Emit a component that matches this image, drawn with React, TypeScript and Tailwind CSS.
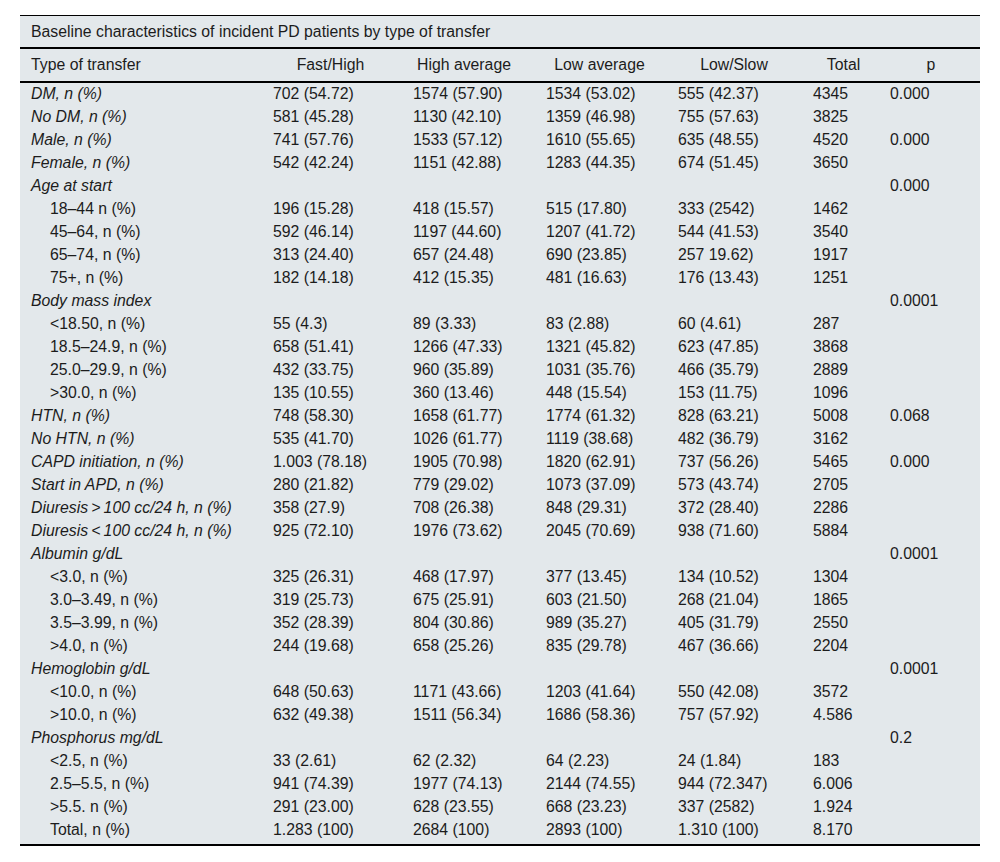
type Row = {
  label: string;
  italic?: boolean;
  indent?: boolean;
  cells?: string[];
  p?: string;
};

const rows: Row[] = [
  { label: "DM, n (%)", italic: true, cells: ["702 (54.72)", "1574 (57.90)", "1534 (53.02)", "555 (42.37)", "4345"], p: "0.000" },
  { label: "No DM, n (%)", italic: true, cells: ["581 (45.28)", "1130 (42.10)", "1359 (46.98)", "755 (57.63)", "3825"] },
  { label: "Male, n (%)", italic: true, cells: ["741 (57.76)", "1533 (57.12)", "1610 (55.65)", "635 (48.55)", "4520"], p: "0.000" },
  { label: "Female, n (%)", italic: true, cells: ["542 (42.24)", "1151 (42.88)", "1283 (44.35)", "674 (51.45)", "3650"] },
  { label: "Age at start", italic: true, p: "0.000" },
  { label: "18–44 n (%)", indent: true, cells: ["196 (15.28)", "418 (15.57)", "515 (17.80)", "333 (2542)", "1462"] },
  { label: "45–64, n (%)", indent: true, cells: ["592 (46.14)", "1197 (44.60)", "1207 (41.72)", "544 (41.53)", "3540"] },
  { label: "65–74, n (%)", indent: true, cells: ["313 (24.40)", "657 (24.48)", "690 (23.85)", "257 19.62)", "1917"] },
  { label: "75+, n (%)", indent: true, cells: ["182 (14.18)", "412 (15.35)", "481 (16.63)", "176 (13.43)", "1251"] },
  { label: "Body mass index", italic: true, p: "0.0001" },
  { label: "<18.50, n (%)", indent: true, cells: ["55 (4.3)", "89 (3.33)", "83 (2.88)", "60 (4.61)", "287"] },
  { label: "18.5–24.9, n (%)", indent: true, cells: ["658 (51.41)", "1266 (47.33)", "1321 (45.82)", "623 (47.85)", "3868"] },
  { label: "25.0–29.9, n (%)", indent: true, cells: ["432 (33.75)", "960 (35.89)", "1031 (35.76)", "466 (35.79)", "2889"] },
  { label: ">30.0, n (%)", indent: true, cells: ["135 (10.55)", "360 (13.46)", "448 (15.54)", "153 (11.75)", "1096"] },
  { label: "HTN, n (%)", italic: true, cells: ["748 (58.30)", "1658 (61.77)", "1774 (61.32)", "828 (63.21)", "5008"], p: "0.068" },
  { label: "No HTN, n (%)", italic: true, cells: ["535 (41.70)", "1026 (61.77)", "1119 (38.68)", "482 (36.79)", "3162"] },
  { label: "CAPD initiation, n (%)", italic: true, cells: ["1.003 (78.18)", "1905 (70.98)", "1820 (62.91)", "737 (56.26)", "5465"], p: "0.000" },
  { label: "Start in APD, n (%)", italic: true, cells: ["280 (21.82)", "779 (29.02)", "1073 (37.09)", "573 (43.74)", "2705"] },
  { label: "Diuresis\u2009>\u2009100 cc/24 h, n (%)", italic: true, cells: ["358 (27.9)", "708 (26.38)", "848 (29.31)", "372 (28.40)", "2286"] },
  { label: "Diuresis\u2009<\u2009100 cc/24 h, n (%)", italic: true, cells: ["925 (72.10)", "1976 (73.62)", "2045 (70.69)", "938 (71.60)", "5884"] },
  { label: "Albumin g/dL", italic: true, p: "0.0001" },
  { label: "<3.0, n (%)", indent: true, cells: ["325 (26.31)", "468 (17.97)", "377 (13.45)", "134 (10.52)", "1304"] },
  { label: "3.0–3.49, n (%)", indent: true, cells: ["319 (25.73)", "675 (25.91)", "603 (21.50)", "268 (21.04)", "1865"] },
  { label: "3.5–3.99, n (%)", indent: true, cells: ["352 (28.39)", "804 (30.86)", "989 (35.27)", "405 (31.79)", "2550"] },
  { label: ">4.0, n (%)", indent: true, cells: ["244 (19.68)", "658 (25.26)", "835 (29.78)", "467 (36.66)", "2204"] },
  { label: "Hemoglobin g/dL", italic: true, p: "0.0001" },
  { label: "<10.0, n (%)", indent: true, cells: ["648 (50.63)", "1171 (43.66)", "1203 (41.64)", "550 (42.08)", "3572"] },
  { label: ">10.0, n (%)", indent: true, cells: ["632 (49.38)", "1511 (56.34)", "1686 (58.36)", "757 (57.92)", "4.586"] },
  { label: "Phosphorus mg/dL", italic: true, p: "0.2" },
  { label: "<2.5, n (%)", indent: true, cells: ["33 (2.61)", "62 (2.32)", "64 (2.23)", "24 (1.84)", "183"] },
  { label: "2.5–5.5, n (%)", indent: true, cells: ["941 (74.39)", "1977 (74.13)", "2144 (74.55)", "944 (72.347)", "6.006"] },
  { label: ">5.5. n (%)", indent: true, cells: ["291 (23.00)", "628 (23.55)", "668 (23.23)", "337 (2582)", "1.924"] },
  { label: "Total, n (%)", indent: true, cells: ["1.283 (100)", "2684 (100)", "2893 (100)", "1.310 (100)", "8.170"] },
];

export default function App() {
  return (
    <div className="min-h-screen bg-white pt-[15px] text-[15.8px] leading-[20px] text-[#1c1c1c] [font-family:'Liberation_Sans',Arial,sans-serif]">
      <div className="mx-[20px] w-[960px] border-t border-b-2 border-black bg-[#e3e8eb] pb-[3px]">
        <table className="w-full table-fixed border-collapse">
          <colgroup>
            <col className="w-[245px]" />
            <col className="w-[140px]" />
            <col className="w-[133px]" />
            <col className="w-[132px]" />
            <col className="w-[135px]" />
            <col className="w-[77px]" />
            <col className="w-[98px]" />
          </colgroup>
          <thead>
            <tr className="h-[32px] border-b-2 border-black">
              <th colSpan={7} className="pl-[11px] text-left font-normal">
                Baseline characteristics of incident PD patients by type of transfer
              </th>
            </tr>
            <tr className="h-[34px] border-b-2 border-black">
              <th className="pl-[11px] text-left font-normal">Type of transfer</th>
              <th className="pr-[9px] text-center font-normal">Fast/High</th>
              <th className="pr-[15px] text-center font-normal">High average</th>
              <th className="pr-[9px] text-center font-normal">Low average</th>
              <th className="pr-[7px] text-center font-normal">Low/Slow</th>
              <th className="text-center font-normal">Total</th>
              <th className="text-center font-normal">p</th>
            </tr>
          </thead>
          <tbody>
            {rows.map((r, i) => (
              <tr key={i} className="h-[23px]">
                <td className={`${r.indent ? "pl-[30px]" : "pl-[11px]"} ${r.italic ? "italic" : ""} whitespace-nowrap`}>
                  {r.label}
                </td>
                {[0, 1, 2, 3, 4].map((c) => (
                  <td key={c} className="pl-[8px] whitespace-nowrap">
                    {r.cells ? r.cells[c] : ""}
                  </td>
                ))}
                <td className="pl-[8px]">{r.p ?? ""}</td>
              </tr>
            ))}
          </tbody>
        </table>
      </div>
    </div>
  );
}
